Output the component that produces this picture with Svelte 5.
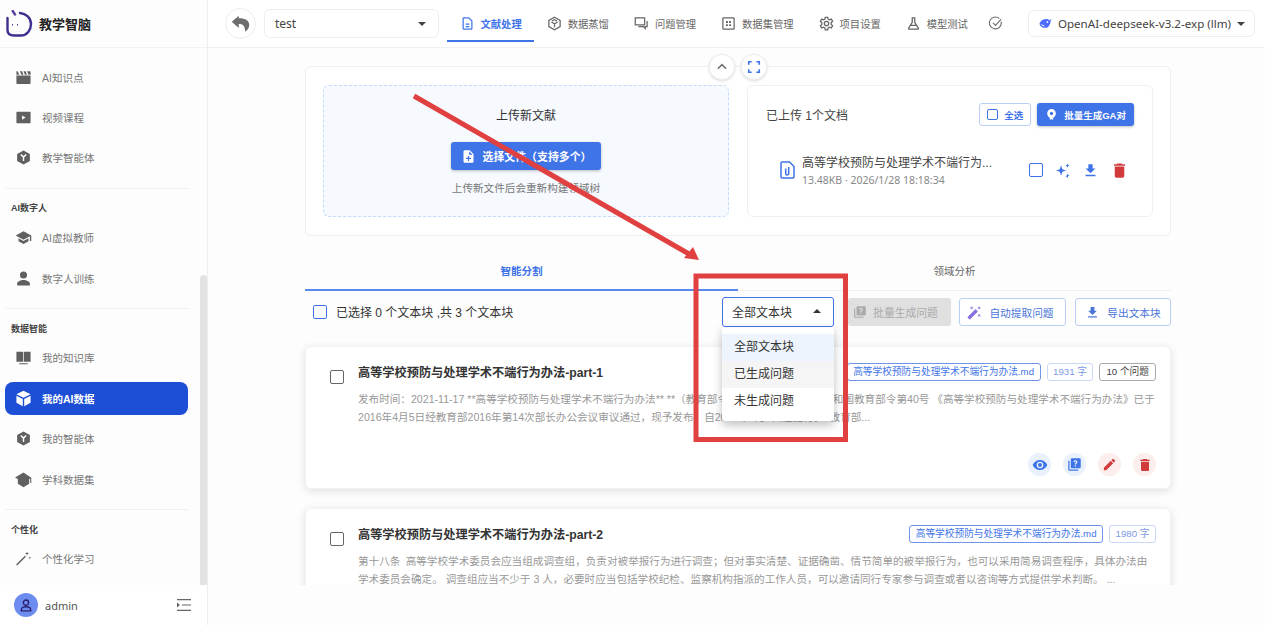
<script>
  const groups = [
    { items: [
      { icon: 'clapper', label: 'AI知识点' },
      { icon: 'play', label: '视频课程' },
      { icon: 'hex', label: '教学智能体' }
    ] },
    { title: 'AI数字人', items: [
      { icon: 'school', label: 'AI虚拟教师' },
      { icon: 'person', label: '数字人训练' }
    ] },
    { title: '数据智能', items: [
      { icon: 'book', label: '我的知识库' },
      { icon: 'cube', label: '我的AI数据', active: true },
      { icon: 'hex', label: '我的智能体' },
      { icon: 'cap', label: '学科数据集' }
    ] },
    { title: '个性化', items: [
      { icon: 'wand', label: '个性化学习' }
    ] }
  ];

  const tabs = [
    { icon: 'doc', label: '文献处理', active: true },
    { icon: 'box', label: '数据蒸馏' },
    { icon: 'chat', label: '问题管理' },
    { icon: 'grid', label: '数据集管理' },
    { icon: 'gear', label: '项目设置' },
    { icon: 'flask', label: '模型测试' }
  ];

  const options = ['全部文本块', '已生成问题', '未生成问题'];

  const chunks = [
    {
      title: '高等学校预防与处理学术不端行为办法-part-1',
      count: '1931 字',
      questions: '10 个问题',
      lines: [
        '发布时间：2021-11-17 **高等学校预防与处理学术不端行为办法** **（教育部令第40号）**中华人民共和国教育部令第40号 《高等学校预防与处理学术不端行为办法》已于',
        '2016年4月5日经教育部2016年第14次部长办公会议审议通过，现予发布，自2016年9月1日起施行。\u2002教育部...'
      ],
      actions: true
    },
    {
      title: '高等学校预防与处理学术不端行为办法-part-2',
      count: '1980 字',
      lines: [
        '第十八条\u2002高等学校学术委员会应当组成调查组，负责对被举报行为进行调查；但对事实清楚、证据确凿、情节简单的被举报行为，也可以采用简易调查程序，具体办法由',
        '学术委员会确定。 调查组应当不少于 3 人，必要时应当包括学校纪检、监察机构指派的工作人员，可以邀请同行专家参与调查或者以咨询等方式提供学术判断。 ...'
      ]
    }
  ];

  const paths = {
    clapper: 'M2 9h20v11a1 1 0 0 1-1 1H3a1 1 0 0 1-1-1V9zM2 3h2l2 5H2V3zm5 0h3l2 5H9L7 3zm5 0h3l2 5h-3l-2-5zm5 0h4a1 1 0 0 1 1 1v4h-3l-2-5z',
    play: 'M3 4h18a1 1 0 0 1 1 1v14a1 1 0 0 1-1 1H3a1 1 0 0 1-1-1V5a1 1 0 0 1 1-1zm7 5v6l5-3-5-3z',
    hex: 'M12 2l9 5v10l-9 5-9-5V7l9-5zM7.500 8.500L11 12v5h2v-5l3.500-3.500-1.400-1.400L12 10l-3.100-2.900-1.400 1.400z',
    school: 'M5 13.200v4L12 21l7-3.800v-4L12 17l-7-3.800zM12 3L1 9l11 6 9-4.900V17h2V9L12 3z',
    person: 'M12 12a5 5 0 1 0 0-10 5 5 0 0 0 0 10zm0 2c-3.300 0-9 1.700-9 5v3h18v-3c0-3.300-5.700-5-9-5z',
    book: 'M2 4h8.500c.8 0 1 .5 1 1v13H2V4zm20 0h-8.500c-.8 0-1 .5-1 1v13H22V4zM6 20h12v1.500H6V20z',
    cap: 'M12 2L0 9l4 2.300V18l8 5 8-5v-6.700L21.500 10.500V17H23V9.500L12 2z',
    wand: 'M3 22l-1.500-1.500L14 8l1.500 1.500L3 22zM17 2l.8 2.200L20 5l-2.200.8L17 8l-.8-2.200L14 5l2.200-.8L17 2zm4 7l.5 1.500L23 11l-1.500.5L21 13l-.5-1.500L19 11l1.500-.5L21 9z',
    download: 'M19 9h-4V3H9v6H5l7 7 7-7zM5 18v2h14v-2H5z',
    trash: 'M6 19c0 1.100.9 2 2 2h8c1.100 0 2-.9 2-2V7H6v12zM19 4h-3.500l-1-1h-5l-1 1H5v2h14V4z',
    edit: 'M3 17.250V21h3.750L17.810 9.940l-3.750-3.750L3 17.250zM20.710 7.040a1 1 0 0 0 0-1.410l-2.340-2.340a1 1 0 0 0-1.410 0l-1.830 1.830 3.750 3.750 1.830-1.830z',
    eye: 'M12 4.500C7 4.500 2.730 7.610 1 12c1.730 4.390 6 7.500 11 7.500s9.270-3.110 11-7.500c-1.730-4.390-6-7.500-11-7.500zM12 17a5 5 0 1 1 0-10 5 5 0 0 1 0 10zm0-8a3 3 0 1 0 0 6 3 3 0 0 0 0-6z',
    quiz: 'M4 6H2v14c0 1.100.9 2 2 2h14v-2H4V6zm16-4H8c-1.100 0-2 .9-2 2v12c0 1.100.9 2 2 2h12c1.100 0 2-.9 2-2V4c0-1.100-.9-2-2-2zm-5.500 13h-2v-2h2v2zm1.700-5.600c-.6.8-1.700 1.200-1.700 2.600h-2c0-2.300 1.500-2.800 2-3.500.4-.6.100-1.500-1-1.500-.8 0-1.200.6-1.300 1.200l-1.900-.8C11 5.900 12 5 13.500 5c1.300 0 2.200.6 2.700 1.300.4.700.6 2.100 0 3.100z',
    spark: 'M10 5l1.900 5.100L17 12l-5.100 1.900L10 19l-1.900-5.100L3 12l5.100-1.900L10 5zm9-3l.9 2.100L22 5l-2.100.9L19 8l-.9-2.100L16 5l2.100-.9L19 2zm0 14l.9 2.100 2.100.9-2.100.9L19 23l-.9-2.100L16 20l2.100-.9.900-2.100z',
    bulb: 'M12 2a8 8 0 0 0-8 8c0 4 3 6.500 5 8.500V22l3-1.500 3 1.500v-3.500c2-2 5-4.500 5-8.500a8 8 0 0 0-8-8zm0 11a3 3 0 1 1 0-6 3 3 0 0 1 0 6z',
    upload: 'M14 2H6a2 2 0 0 0-2 2v16a2 2 0 0 0 2 2h12a2 2 0 0 0 2-2V8l-6-6zm-1 17h-2v-3H8v-2h3v-3h2v3h3v2h-3v3zm0-10V3.500L18.500 9H13z',
    magic: 'M7.500 5.600L10 7 8.600 4.500 10 2 7.500 3.400 5 2l1.400 2.500L5 7l2.500-1.400zm12 9.800L17 14l1.400 2.500L17 19l2.500-1.400L22 19l-1.400-2.500L22 14l-2.500 1.400zM22 2l-2.500 1.400L17 2l1.400 2.500L17 7l2.500-1.400L22 7l-1.400-2.500L22 2zm-7.630 5.290a1 1 0 0 0-1.410 0L1.290 18.960a1 1 0 0 0 0 1.410l2.340 2.340a1 1 0 0 0 1.410 0L16.700 11.050a1 1 0 0 0 0-1.410l-2.330-2.350z'
  };
</script>

{#snippet icon(name, size = 16)}
  <svg class="ico" width={size} height={size} viewBox="0 0 24 24" fill="currentColor"><path d={paths[name]} /></svg>
{/snippet}

{#snippet checkbox(cls)}
  <span class="check {cls}"></span>
{/snippet}

<div class="app">
  <aside class="sidebar">
    <div class="brand">
      <svg width="27" height="28" viewBox="0 0 27 28" fill="none" stroke="#3f2f8f" stroke-width="2.400" stroke-linecap="round">
        <path d="M1.500 8V20C1.500 24 4 25.500 8 25.500H15C21 25.500 25 20 25 14C25 8 20 3.500 14 3" />
        <path d="M6.700 1L9 4.500" stroke="#5a3fa0" />
        <path d="M6.500 14.500v.6M11.500 14.500v.6" stroke-width="1" />
      </svg>
      <span>教学智脑</span>
    </div>
    <div class="side-scroll">
      <nav class="side-nav">
        {#each groups as group, i}
          <div class="group" class:ruled={i < groups.length - 1}>
            {#if group.title}
              <div class="group-title">{group.title}</div>
            {/if}
            {#each group.items as item}
              <div class="side-item" class:active={item.active}>
                {#if item.icon === 'cube'}
                  <svg class="ico" width="17" height="17" viewBox="0 0 24 24" fill="currentColor"><path d="M12 1l10 5-10 5L2 6l10-5zM2 8l9 4.600V23l-9-5V8zm20 0v10l-9 5V12.600L22 8z" /></svg>
                {:else}
                  {@render icon(item.icon, 17)}
                {/if}
                <span>{item.label}</span>
              </div>
            {/each}
          </div>
        {/each}
      </nav>
      <div class="side-track"><div class="side-thumb"></div></div>
    </div>
    <div class="side-foot">
      <span class="avatar">
        <svg width="14" height="14" viewBox="0 0 24 24" fill="none" stroke="#2b2170" stroke-width="2.400"><circle cx="12" cy="8" r="4.500" /><path d="M4 22v-2c0-3 3-5 8-5s8 2 8 5v2z" /></svg>
      </span>
      <span class="admin">admin</span>
      <svg class="collapse" width="16" height="14" viewBox="0 0 16 14" fill="#666"><path d="M1 1h14v1.200H1zM6 6.400h9v1.200H6zM1 11.800h14V13H1zM1 4.500L4 7 1 9.500z" /></svg>
    </div>
  </aside>

  <div class="main">
    <header class="topbar">
      <button class="back">
        <svg width="21" height="21" viewBox="0 0 24 24" fill="#6e6e6e"><path d="M10 3L2 10l8 7v-4.500c4.500 0 7 1.500 7.500 9 3-2 4.500-5 4.500-8 0-4.500-4-7.500-12-7.500V3z" /></svg>
      </button>
      <div class="project">
        <span>test</span>
        <span class="caret"></span>
      </div>
      <nav class="tabs">
        {#each tabs as tab}
          <div class="tab" class:active={tab.active}>
            {#if tab.icon === 'doc'}
              <svg class="ico" width="15" height="15" viewBox="0 0 24 24" fill="none" stroke="currentColor" stroke-width="2"><path d="M14 3H6a1 1 0 0 0-1 1v16a1 1 0 0 0 1 1h12a1 1 0 0 0 1-1V8l-5-5zM9 13h6M9 17h6" /></svg>
            {:else if tab.icon === 'box'}
              <svg class="ico" width="15" height="15" viewBox="0 0 24 24" fill="none" stroke="currentColor" stroke-width="2"><path d="M12 2l9 5v10l-9 5-9-5V7l9-5zM7 9.500l5 3 5-3M12 12.500V18M8 8l4-2 4 2" /></svg>
            {:else if tab.icon === 'chat'}
              <svg class="ico" width="15" height="15" viewBox="0 0 24 24" fill="none" stroke="currentColor" stroke-width="2"><path d="M2 3h15v11H2zM21 8v9h-3v3l-3-3H7" /></svg>
            {:else if tab.icon === 'grid'}
              <svg class="ico" width="15" height="15" viewBox="0 0 24 24" fill="none" stroke="currentColor" stroke-width="2"><rect x="3" y="3" width="18" height="18" rx="1" /><path d="M8 8h3v3H8zM13 8h3v3h-3zM8 13h3v3H8zM13 13h3v3h-3z" fill="currentColor" stroke="none" /></svg>
            {:else if tab.icon === 'gear'}
              <svg class="ico" width="15" height="15" viewBox="0 0 24 24" fill="none" stroke="currentColor" stroke-width="2"><circle cx="12" cy="12" r="3.500" /><path d="M10 2h4l.6 3 2.400 1.200 2.800-1.200 2 3.500-2.300 2v3l2.300 2-2 3.500-2.800-1.200-2.400 1.200-.6 3h-4l-.6-3L7 17.800 4.200 19l-2-3.500 2.300-2v-3l-2.300-2 2-3.500L7 6.200 9.400 5z" /></svg>
            {:else}
              <svg class="ico" width="15" height="15" viewBox="0 0 24 24" fill="none" stroke="currentColor" stroke-width="2"><path d="M9 3h6M10 3v7L4 20a1 1 0 0 0 1 1h14a1 1 0 0 0 1-1l-6-10V3M7.500 15h9" /></svg>
            {/if}
            <span>{tab.label}</span>
          </div>
        {/each}
      </nav>
      <svg class="status" width="15" height="15" viewBox="0 0 24 24" fill="none" stroke="#6e6e6e" stroke-width="1.800"><path d="M21 9a9.500 9.500 0 1 1-3-5" /><path d="M8 11l4 4 9-10" /></svg>
      <div class="model">
        <svg width="13" height="11" viewBox="0 0 24 20" fill="#4d6bfe"><path d="M23 2c-1 0-2 1-3 2-4-3-9-3-13-1C3 5 1 9 1 11c1 5 6 8 11 7 3 0 6-2 7-5 2-2 3-6 2-8 1 0 2-2 2-3zM12 15c-4 1-7-1-8-4 2 1 5 3 8 4zm4-6c-1 0-2-1-2-2s1-1 2-1 1 1 1 2-1 1-1 1z" /></svg>
        <span>OpenAI-deepseek-v3.2-exp (llm)</span>
        <span class="caret"></span>
      </div>
    </header>

    <div class="content">
      <section class="upload-card">
        <button class="float-btn up">
          <svg width="14" height="14" viewBox="0 0 24 24" fill="none" stroke="#6e6e6e" stroke-width="2.600"><path d="M5 15l7-7 7 7" /></svg>
        </button>
        <button class="float-btn full">
          <svg width="14" height="14" viewBox="0 0 24 24" fill="none" stroke="#3f74e8" stroke-width="2.800"><path d="M3 8V3h5M16 3h5v5M21 16v5h-5M8 21H3v-5" /></svg>
        </button>
        <div class="drop">
          <h3>上传新文献</h3>
          <button class="btn primary pick">{@render icon('upload', 15)}选择文件（支持多个）</button>
          <p>上传新文件后会重新构建领域树</p>
        </div>
        <div class="files">
          <div class="files-head">
            <span>已上传 1个文档</span>
            <div class="files-actions">
              <button class="btn outline small">{@render checkbox('blue thin')}全选</button>
              <button class="btn primary small">{@render icon('bulb', 13)}批量生成GA对</button>
            </div>
          </div>
          <div class="file-row">
            <svg class="file-ico" width="15" height="18" viewBox="0 0 15 18" fill="none" stroke="#3f74e8" stroke-width="1.500"><path d="M9.500 1H2a1 1 0 0 0-1 1v14a1 1 0 0 0 1 1h11a1 1 0 0 0 1-1V5.500L9.500 1z" /><path d="M8.700 6v6.500a1.500 1.500 0 0 1-3 0V7.500" /></svg>
            <div class="file-text">
              <div class="file-name">高等学校预防与处理学术不端行为...</div>
              <div class="file-meta">13.48KB · 2026/1/28 18:18:34</div>
            </div>
            <div class="file-actions">
              {@render checkbox('blue')}
              <span class="blue">{@render icon('spark', 17)}</span>
              <span class="blue">{@render icon('download', 17)}</span>
              <span class="red">{@render icon('trash', 19)}</span>
            </div>
          </div>
        </div>
      </section>

      <div class="seg-tabs">
        <div class="seg active">智能分割</div>
        <div class="seg">领域分析</div>
      </div>

      <div class="toolbar">
        {@render checkbox('blue')}
        <span class="selected">已选择 0 个文本块 ,共 3 个文本块</span>
        <div class="filter">
          <div class="select">
            <span>全部文本块</span>
            <span class="caret up"></span>
          </div>
          <ul class="menu">
            {#each options as option, i}
              <li class:picked={i === 0} class:hover={i === 1}>{option}</li>
            {/each}
          </ul>
        </div>
        <button class="btn disabled">{@render icon('quiz', 14)}批量生成问题</button>
        <button class="btn outline tool magic"><span class="purple">{@render icon('magic', 15)}</span>自动提取问题</button>
        <button class="btn outline tool export">{@render icon('download', 15)}导出文本块</button>
      </div>

      {#each chunks as chunk}
        <article class="chunk">
          {@render checkbox('gray')}
          <div class="chunk-body">
            <div class="chunk-head">
              <h4>{chunk.title}</h4>
              <div class="tags">
                <span class="tag file">高等学校预防与处理学术不端行为办法.md</span>
                <span class="tag count">{chunk.count}</span>
                {#if chunk.questions}
                  <span class="tag dark">{chunk.questions}</span>
                {/if}
              </div>
            </div>
            <div class="chunk-text">
              {#each chunk.lines as line}
                <div>{line}</div>
              {/each}
            </div>
            {#if chunk.actions}
              <div class="chunk-actions">
                <span class="round blue">{@render icon('eye', 16)}</span>
                <span class="round blue">{@render icon('quiz', 15)}</span>
                <span class="round red">{@render icon('edit', 15)}</span>
                <span class="round red">{@render icon('trash', 16)}</span>
              </div>
            {/if}
          </div>
        </article>
      {/each}
    </div>
  </div>

  <svg class="markup" width="1265" height="625" viewBox="0 0 1265 625">
    <path d="M414 96L689 254" stroke="#e04040" stroke-width="5" fill="none" />
    <path d="M699 260L684 258L693 247z" fill="#e04040" />
    <rect x="696" y="276" width="149.500" height="163.500" fill="none" stroke="#e04040" stroke-width="5" />
  </svg>
</div>

<style>
  :global(body) {
    margin: 0;
    background: #fff;
  }

  .app {
    position: relative;
    display: flex;
    width: 1265px;
    height: 625px;
    overflow: hidden;
    font-family: "Liberation Sans", "Noto Sans CJK SC", sans-serif;
    color: #333;
  }

  button {
    font: inherit;
    cursor: pointer;
  }

  .ico {
    flex: none;
    display: block;
  }

  .blue {
    color: #3f74e8;
  }

  .red {
    color: #d13b3b;
  }

  .purple {
    color: #8a6fe0;
  }

  .sidebar {
    flex: none;
    width: 207px;
    display: flex;
    flex-direction: column;
    border-right: 1px solid #eee;
    background: #fdfdfd;
  }

  .brand {
    height: 48px;
    flex: none;
    box-sizing: border-box;
    display: flex;
    align-items: center;
    gap: 6px;
    padding-left: 6px;
    border-bottom: 1px solid #f2f2f2;
    font-size: 13px;
    font-weight: 700;
    color: #222;
  }

  .side-scroll {
    flex: 1;
    min-height: 0;
    display: flex;
  }

  .side-nav {
    flex: 1;
    min-width: 0;
    overflow: hidden;
    padding: 0 12px 0 5px;
  }

  .side-track {
    flex: none;
    width: 7px;
    position: relative;
  }

  .side-thumb {
    position: absolute;
    top: 227px;
    bottom: 0;
    left: 0;
    right: 0;
    background: #e3e3e3;
    border-radius: 4px 4px 0 0;
  }

  .group {
    padding-bottom: 6.200px;
  }

  .group.ruled {
    border-bottom: 1px solid #f0f0f0;
    margin-bottom: 10.500px;
  }

  .group-title {
    font-size: 9px;
    font-weight: 700;
    color: #444;
    padding: 2px 6px 0;
    height: 15px;
    line-height: 15px;
  }

  .side-item {
    height: 33px;
    margin: 7.400px 0;
    display: flex;
    align-items: center;
    gap: 10px;
    padding-left: 10px;
    font-size: 10.500px;
    color: #777;
    border-radius: 8px;
  }

  .side-item:first-child {
    margin-top: 12.500px;
  }

  .group-title + .side-item {
    margin-top: 4.800px;
  }

  .side-item .ico {
    color: #606060;
  }

  .side-item.active {
    background: #1c4fd6;
    color: #fff;
    font-weight: 700;
  }

  .side-item.active .ico {
    color: #fff;
  }

  .side-foot {
    flex: none;
    height: 40px;
    display: flex;
    align-items: center;
    padding: 0 15px 0 14px;
    background: #fff;
  }

  .avatar {
    width: 24px;
    height: 24px;
    border-radius: 50%;
    background: #6d8cf0;
    display: flex;
    align-items: center;
    justify-content: center;
  }

  .admin {
    margin-left: 7px;
    font-size: 11px;
    color: #555;
    font-family: "Noto Sans", sans-serif;
  }

  .collapse {
    margin-left: auto;
  }

  .main {
    flex: 1;
    min-width: 0;
    display: flex;
    flex-direction: column;
    background: #fdfdfd;
  }

  .topbar {
    height: 48px;
    flex: none;
    box-sizing: border-box;
    display: flex;
    align-items: center;
    padding: 0 10px 0 17px;
    border-bottom: 1px solid #f0f0f0;
    background: #fff;
  }

  .back {
    width: 31px;
    height: 31px;
    padding: 0;
    border: 1px solid #ececec;
    border-radius: 50%;
    background: #fff;
    display: flex;
    align-items: center;
    justify-content: center;
  }

  .project {
    width: 175px;
    height: 29px;
    box-sizing: border-box;
    margin-left: 8px;
    padding: 0 12px 0 10px;
    border: 1px solid #eee;
    border-radius: 6px;
    display: flex;
    align-items: center;
    justify-content: space-between;
    font-size: 12px;
    color: #444;
    font-family: "Noto Sans", sans-serif;
  }

  .caret {
    width: 0;
    height: 0;
    border-left: 4px solid transparent;
    border-right: 4px solid transparent;
    border-top: 4px solid #444;
  }

  .caret.up {
    border-top: 0;
    border-bottom: 4px solid #333;
  }

  .tabs {
    display: flex;
    margin-left: 8px;
    height: 100%;
  }

  .tab {
    box-sizing: border-box;
    height: 36px;
    align-self: flex-end;
    margin-bottom: 5px;
    padding: 0 12.500px;
    display: flex;
    align-items: center;
    gap: 6px;
    font-size: 10.300px;
    color: #666;
    border-bottom: 2px solid transparent;
  }

  .tab.active {
    color: #3f74e8;
    font-weight: 700;
    border-bottom-color: #3f74e8;
  }

  .status {
    margin-left: 8px;
  }

  .model {
    margin-left: auto;
    height: 27px;
    width: 227px;
    box-sizing: border-box;
    padding: 0 9px 0 10px;
    border: 1px solid #eee;
    border-radius: 6px;
    display: flex;
    align-items: center;
    justify-content: space-between;
    font-size: 11.600px;
    color: #444;
    font-family: "Noto Sans", sans-serif;
    white-space: nowrap;
  }

  .content {
    flex: 1;
    min-height: 0;
    overflow: hidden;
    padding: 18px 94px 0 97px;
    margin-bottom: 40px;
  }

  .upload-card {
    position: relative;
    height: 170px;
    box-sizing: border-box;
    padding: 18px 18px 18px 17px;
    border: 1px solid #eee;
    border-radius: 6px;
    background: #fff;
    display: grid;
    grid-template-columns: 406px 406px;
    gap: 18px;
  }

  .float-btn {
    position: absolute;
    top: -13px;
    width: 26px;
    height: 26px;
    padding: 0;
    border: 1px solid #f0f0f0;
    border-radius: 50%;
    background: #fff;
    box-shadow: 0 1px 3px rgba(0, 0, 0, 0.15);
    display: flex;
    align-items: center;
    justify-content: center;
  }

  .float-btn.up {
    left: 403px;
  }

  .float-btn.full {
    left: 435px;
  }

  .drop {
    box-sizing: border-box;
    border: 1px dashed #c4dafc;
    border-radius: 6px;
    background: #f6f9fe;
    display: flex;
    flex-direction: column;
    align-items: center;
  }

  .drop h3 {
    margin: 21px 0 0;
    font-size: 12px;
    line-height: 18px;
    font-weight: 400;
    color: #333;
  }

  .drop p {
    margin: 10px 0 0;
    font-size: 10.600px;
    line-height: 16px;
    color: #777;
  }

  .btn {
    box-sizing: border-box;
    display: inline-flex;
    align-items: center;
    justify-content: center;
    gap: 6px;
    border-radius: 3px;
    white-space: nowrap;
    font-size: 10.500px;
    font-weight: 700;
    border: 1px solid transparent;
    padding: 0;
  }

  .btn.primary {
    background: #3f74e8;
    color: #fff;
    box-shadow: 0 1px 3px rgba(0, 0, 0, 0.25);
  }

  .btn.pick {
    width: 150px;
    height: 28px;
    margin-top: 17px;
    font-size: 10.900px;
    gap: 7px;
  }

  .btn.outline {
    background: #fff;
    border-color: #b9cff5;
    color: #3f74e8;
  }

  .btn.small {
    height: 23px;
    font-size: 9.500px;
    padding: 0 7px;
  }

  .btn.disabled {
    width: 103px;
    height: 28px;
    margin-left: 14px;
    padding-right: 8px;
    background: #e0e0e0;
    color: #aaa;
    font-size: 10.800px;
    font-weight: 400;
  }

  .btn.tool {
    height: 28px;
    color: #4a74d8;
    font-size: 10.700px;
    font-weight: 400;
    gap: 7px;
  }

  .btn.magic {
    width: 107px;
    margin-left: 8px;
    padding-right: 4px;
  }

  .btn.export {
    width: 96px;
    margin-left: 9px;
  }

  .files {
    box-sizing: border-box;
    border: 1px solid #f0f0f0;
    border-radius: 6px;
    padding: 18px;
  }

  .files-head {
    display: flex;
    align-items: center;
    justify-content: space-between;
    font-size: 12px;
    color: #444;
    margin-top: -1px;
  }

  .files-actions {
    display: flex;
    gap: 6px;
  }

  .file-row {
    display: flex;
    align-items: center;
    margin-top: 27px;
    padding-left: 14px;
  }

  .file-ico {
    flex: none;
  }

  .file-text {
    margin-left: 7px;
    padding-top: 2px;
    flex: 1;
  }

  .file-name {
    font-size: 12px;
    line-height: 16px;
    color: #444;
  }

  .file-meta {
    font-size: 10.500px;
    line-height: 14px;
    margin-top: 2px;
    color: #888;
    font-family: "Noto Sans", sans-serif;
  }

  .file-actions {
    display: flex;
    align-items: center;
    gap: 11px;
    padding-right: 5px;
  }

  .check {
    display: block;
    flex: none;
    width: 14px;
    height: 14px;
    box-sizing: border-box;
    border: 1.800px solid #666;
    border-radius: 2px;
  }

  .check.blue {
    border-color: #3f74e8;
  }

  .check.thin {
    width: 11px;
    height: 11px;
    border-width: 1.500px;
  }

  .seg-tabs {
    display: grid;
    grid-template-columns: 1fr 1fr;
    margin-top: 19px;
    height: 35px;
    border-bottom: 1px solid #eee;
    font-size: 10.500px;
  }

  .seg {
    text-align: center;
    line-height: 32px;
    color: #666;
  }

  .seg.active {
    color: #3f74e8;
    border-bottom: 2px solid #5b8aee;
    height: 34px;
    font-weight: 700;
  }

  .toolbar {
    display: flex;
    align-items: center;
    height: 30px;
    margin-top: 6px;
    padding-left: 8px;
    font-size: 12px;
  }

  .selected {
    margin-left: 9px;
    padding-bottom: 2px;
    color: #333;
  }

  .filter {
    position: relative;
    margin-left: auto;
    width: 112px;
    z-index: 2;
  }

  .select {
    height: 30px;
    box-sizing: border-box;
    padding: 0 12px 2px 9px;
    border: 1px solid #3f74e8;
    border-radius: 3px;
    display: flex;
    align-items: center;
    justify-content: space-between;
    background: #fff;
    color: #333;
    font-size: 12px;
  }

  .menu {
    position: absolute;
    left: 0;
    right: 0;
    top: 30px;
    margin: 0;
    padding: 7px 0 0;
    list-style: none;
    height: 94px;
    box-sizing: border-box;
    background: #fff;
    border-radius: 0 0 3px 3px;
    box-shadow: 0 4px 10px rgba(0, 0, 0, 0.25);
  }

  .menu li {
    height: 27px;
    line-height: 27px;
    padding-left: 12px;
    font-size: 12px;
    color: #333;
  }

  .menu li.picked {
    background: #eef4fd;
  }

  .menu li.hover {
    background: #f5f5f5;
  }

  .chunk {
    display: flex;
    margin-top: 19px;
    height: 143px;
    box-sizing: border-box;
    padding: 14px 14px 0 24px;
    border: 1px solid #f2f2f2;
    border-radius: 6px;
    background: #fff;
    box-shadow: 0 2px 8px rgba(0, 0, 0, 0.12);
  }

  .chunk + .chunk {
    margin-top: 19px;
  }

  .chunk > .check {
    margin-top: 9px;
  }

  .chunk-body {
    flex: 1;
    min-width: 0;
    margin-left: 14px;
    display: flex;
    flex-direction: column;
  }

  .chunk-head {
    display: flex;
    align-items: center;
    justify-content: space-between;
    height: 22px;
  }

  .chunk-head h4 {
    margin: 0;
    font-size: 12.200px;
    font-weight: 700;
    color: #333;
  }

  .tags {
    display: flex;
    gap: 6px;
  }

  .tag {
    height: 18px;
    box-sizing: border-box;
    padding: 0 5.500px;
    border: 1px solid #c9d8f5;
    border-radius: 3px;
    font-size: 9.700px;
    line-height: 16px;
    color: #7e9ae4;
    white-space: nowrap;
  }

  .tag.file {
    border-color: #6e95ea;
    color: #3f74e8;
  }

  .tag.dark {
    padding: 0 6px;
    border-color: #aaa;
    color: #444;
  }

  .chunk-text {
    margin-top: 7px;
    font-size: 10.600px;
    line-height: 18px;
    color: #999;
    white-space: nowrap;
  }

  .chunk-actions {
    margin-top: auto;
    margin-bottom: 12px;
    display: flex;
    justify-content: flex-end;
    gap: 12px;
  }

  .round {
    width: 23px;
    height: 23px;
    border-radius: 50%;
    display: flex;
    align-items: center;
    justify-content: center;
  }

  .round.blue {
    background: #e9f1fd;
  }

  .round.red {
    background: #fbeeec;
  }

  .markup {
    position: absolute;
    left: 0;
    top: 0;
    pointer-events: none;
    z-index: 5;
  }
</style>
